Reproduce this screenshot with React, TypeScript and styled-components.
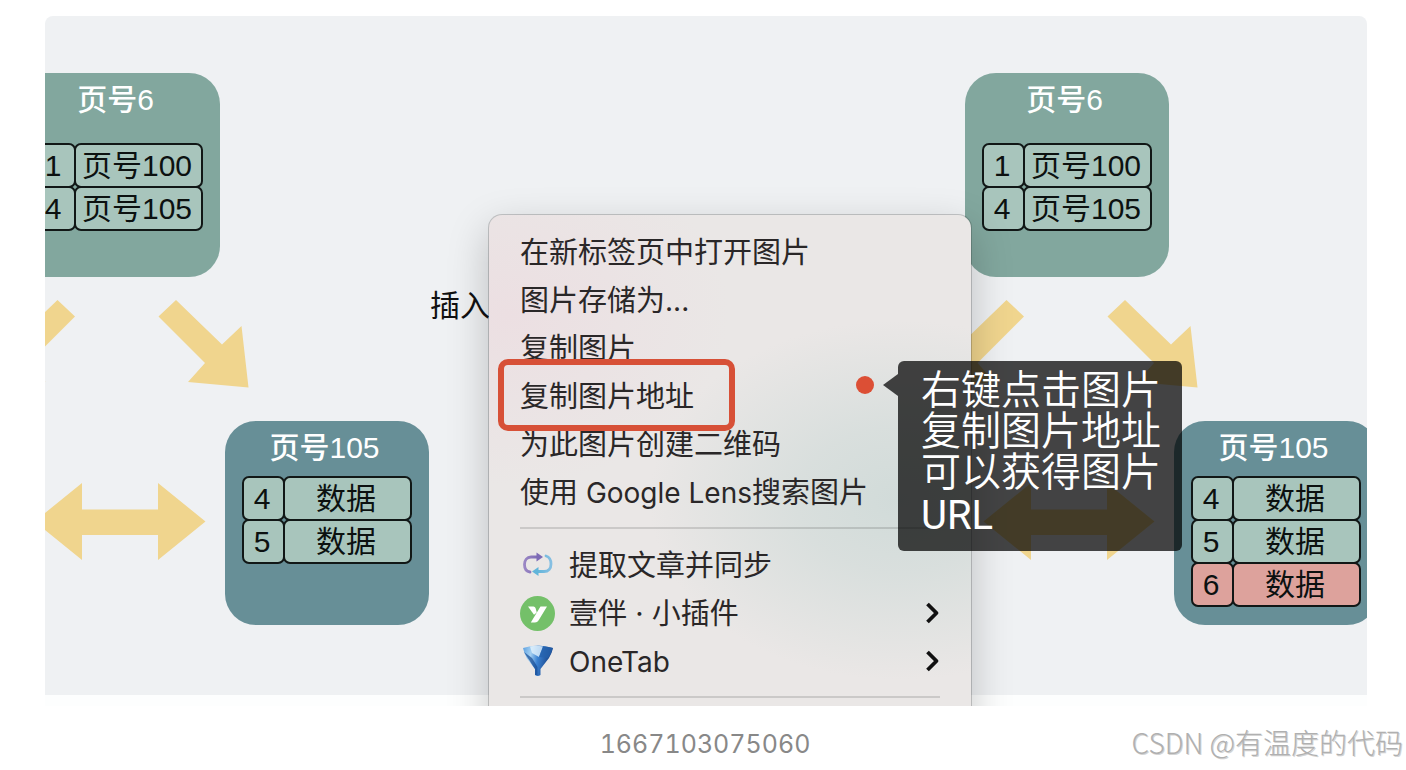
import React from "react";
import styled, { createGlobalStyle } from "styled-components";

const cjk = '"Noto Sans CJK SC", sans-serif';

const GlobalStyle = createGlobalStyle`
  *, *::before, *::after { box-sizing: border-box; }
  body { margin: 0; background: #fff; }
`;

const Page = styled.main`
  padding-top: 16px;
  overflow: hidden;
`;

const Figure = styled.figure`
  margin: 0;
`;

const Stage = styled.div`
  position: relative;
  height: 690px;
  margin: 0 39px 0 45px;
  padding-bottom: 11px;
  overflow: hidden;
  border-radius: 8px 8px 0 0;
  background: #fdfefe;
`;

const Canvas = styled.div`
  height: 100%;
  background: #eff1f3;
`;

const Tree = styled.section<{ $x: number }>`
  position: absolute;
  top: 0;
  left: ${(p) => p.$x}px;
  width: 420px;
  height: 679px;
`;

const Arrows = styled.svg`
  position: absolute;
  top: 0;
  left: 0;
  overflow: visible;
  fill: #f0d58e;
`;

const NodeCard = styled.article<{ $leaf?: boolean }>`
  position: absolute;
  left: ${(p) => (p.$leaf ? 180 : -29)}px;
  top: ${(p) => (p.$leaf ? 405 : 57)}px;
  display: flex;
  flex-direction: column;
  align-items: center;
  gap: ${(p) => (p.$leaf ? 10 : 25)}px;
  width: 204px;
  height: 204px;
  padding-top: 9px;
  border-radius: 31px;
  background: ${(p) => (p.$leaf ? "#678f97" : "#82a79e")};
  font-family: "Liberation Sans", ${cjk};
  font-size: 30px;
  line-height: 36px;
`;

const NodeTitle = styled.h2`
  margin: 0;
  padding-right: 5px;
  color: #fff;
  font-size: inherit;
  font-weight: 500;
`;

const Records = styled.table`
  display: block;
  width: 170px;
  color: #0c1110;
`;

const RecordBody = styled.tbody`
  display: block;
`;

const RecordRow = styled.tr<{ $added?: boolean }>`
  display: flex;
  height: 45px;

  & + & { margin-top: -2px; }

  th, td {
    display: flex;
    align-items: center;
    justify-content: center;
    padding: 0 3px 0 0;
    border: 2px solid #111716;
    border-radius: 7px;
    background: ${(p) => (p.$added ? "#dda29c" : "#a8c5bc")};
    font-weight: 400;
    white-space: nowrap;
  }
  th { width: 43px; margin-right: -2px; }
  td { flex: 1; }
`;

const InsertLabel = styled.span`
  position: absolute;
  left: 385px;
  top: 269px;
  color: #111;
  font: 30px/36px ${cjk};
`;

const Menu = styled.ul`
  position: absolute;
  left: 444px;
  top: 199px;
  width: 482px;
  margin: 0;
  padding: 13px 31px 40px;
  list-style: none;
  border-radius: 13px;
  background:
    radial-gradient(ellipse 250px 180px at 410px 285px, #d1dbd9 0%, rgba(211, 220, 218, 0.75) 40%, rgba(234, 231, 230, 0) 100%),
    radial-gradient(ellipse 220px 170px at 20px 100px, #ecdfe2 0%, rgba(236, 223, 226, 0) 100%),
    #eae7e6;
  box-shadow: 0 0 0 1px rgba(0, 0, 0, 0.18), 0 14px 42px rgba(0, 0, 0, 0.22);
`;

const MenuRow = styled.li<{ $marked?: boolean }>`
  position: relative;

  &::after {
    content: ${(p) => (p.$marked ? '""' : "none")};
    position: absolute;
    z-index: 1;
    left: -22px;
    top: -13px;
    width: 237px;
    height: 72px;
    border: 6px solid #d75037;
    border-radius: 10px;
    pointer-events: none;
  }
`;

const MenuButton = styled.button`
  display: flex;
  align-items: center;
  gap: 14px;
  width: 100%;
  height: 48px;
  padding: 0;
  border: 0;
  background: none;
  color: #2a2728;
  font: 29px/42px ${cjk};
  text-align: left;
  white-space: pre;
`;

const Latin = styled.span`
  font-family: Inter, sans-serif;
  font-size: 28px;
`;

const MenuText = styled.span`
  flex: 1;
  height: 40px;
  font-family: Inter, ${cjk};
`;

const Divider = styled.li`
  height: 2px;
  margin: 11px 0 12px;
  background: rgba(0, 0, 0, 0.13);
`;

const Dot = styled.span`
  position: absolute;
  left: 811px;
  top: 360px;
  width: 18px;
  height: 18px;
  border-radius: 50%;
  background: #dc4f35;
`;

const Tooltip = styled.aside`
  position: absolute;
  left: 853px;
  top: 345px;
  width: 284px;
  padding: 9px 20px 12px 23px;
  border-radius: 6px;
  background: rgba(0, 0, 0, 0.72);
  color: #fff;
  font: 350 40px/41px Roboto, ${cjk};

  &::before {
    content: "";
    position: absolute;
    left: -15px;
    top: 13px;
    width: 15px;
    height: 22px;
    background: rgba(0, 0, 0, 0.72);
    clip-path: polygon(0 50%, 100% 0, 100% 100%);
  }
`;

const TooltipLine = styled.span<{ $latin?: boolean }>`
  display: block;
  font-weight: ${(p) => (p.$latin ? 400 : 350)};
  line-height: ${(p) => (p.$latin ? 46 : 41)}px;
  white-space: nowrap;
`;

const Footer = styled.figcaption`
  display: grid;
  grid-template-columns: 1fr auto 1fr;
  padding: 20px 3px 8px 7px;
`;

const Caption = styled.span`
  grid-column: 2;
  color: #888;
  font: 25px/36px Inter, sans-serif;
  font-variant-numeric: tabular-nums;
`;

const Watermark = styled.span`
  justify-self: end;
  color: #b0b0b0;
  font: 300 28px/32px ${cjk};
  text-shadow: 1px 1px 0 #d4d4d4;
  white-space: nowrap;
`;

type RecordItem = { id: number; value: string; added?: boolean };

function PageNode({ title, leaf, records }: { title: string; leaf?: boolean; records: RecordItem[] }) {
  return (
    <NodeCard $leaf={leaf}>
      <NodeTitle>{title}</NodeTitle>
      <Records>
        <RecordBody>
          {records.map((r) => (
            <RecordRow key={r.id} $added={r.added}>
              <th scope="row">{r.id}</th>
              <td>{r.value}</td>
            </RecordRow>
          ))}
        </RecordBody>
      </Records>
    </NodeCard>
  );
}

const indexRecords: RecordItem[] = [
  { id: 1, value: "页号100" },
  { id: 4, value: "页号105" },
];

const before: RecordItem[] = [
  { id: 4, value: "数据" },
  { id: 5, value: "数据" },
];

const after: RecordItem[] = [...before, { id: 6, value: "数据", added: true }];

function PageTree({ x, records }: { x: number; records: RecordItem[] }) {
  return (
    <Tree $x={x}>
      <Arrows width="420" height="679" aria-hidden="true">
        <path d="M131 284 177 328.500 196.500 310 203.500 371.500 143 366 160 347 113.500 300.500Z" />
        <path d="M12.500 284-33.500 328.500-53 310-60 371.500.500 366-16.500 347 30 300.500Z" />
        <path d="M-10.500 505.500 37 467V493.500H113V467L160.500 505.500 113 544V519H37V544Z" />
      </Arrows>
      <PageNode title="页号6" records={indexRecords} />
      <PageNode title="页号105" leaf records={records} />
    </Tree>
  );
}

function SyncIcon() {
  return (
    <svg width="35" height="35" viewBox="0 0 35 35" fill="none" aria-hidden="true">
      <defs>
        <linearGradient id="syncA" x1="0" x2="1">
          <stop offset="0" stopColor="#9a86c4" />
          <stop offset="1" stopColor="#7d6bb5" />
        </linearGradient>
        <linearGradient id="syncB" x1="0" x2="1">
          <stop offset="0" stopColor="#62b5da" />
          <stop offset="1" stopColor="#86bfe2" />
        </linearGradient>
      </defs>
      <path d="M10 24C6 23.500 4.500 20 4.500 16.500C4.500 12 7 9 11 9H18" stroke="url(#syncA)" strokeWidth="2.800" strokeLinecap="round" />
      <path d="M16.500 4.500 23 9 16.500 13.500Z" fill="#7d6bb5" />
      <path d="M26 8C29.500 9 31 12.500 31 16C31 20.500 28.500 23.500 24 23.500H17" stroke="url(#syncB)" strokeWidth="2.800" strokeLinecap="round" />
      <path d="M18.500 19 12 23.500 18.500 28Z" fill="#62b5da" />
    </svg>
  );
}

function YibanIcon() {
  return (
    <svg width="35" height="35" viewBox="0 0 35 35" aria-hidden="true">
      <circle cx="17.500" cy="17.500" r="17.500" fill="#74c069" />
      <path d="M8 10.500H13.500Q15 10.500 15.500 12L16.800 16.500 14 18.700Z" fill="#fff" />
      <path d="M20.500 10.500H27L18.500 24.500Q17.300 26.500 15 26.500H10.800Z" fill="#fff" />
    </svg>
  );
}

function FunnelIcon() {
  return (
    <svg width="35" height="35" viewBox="0 0 35 35" aria-hidden="true">
      <defs>
        <linearGradient id="funnel" x1="0" x2="1" y2=".2">
          <stop offset="0" stopColor="#5ba0e0" />
          <stop offset=".3" stopColor="#a5d0f2" />
          <stop offset=".55" stopColor="#3b82d2" />
          <stop offset="1" stopColor="#163f83" />
        </linearGradient>
      </defs>
      <path d="M3 4Q17.500-1 33 4Q32 9 29 14L20.500 25V31Q17.500 33 15 31V25L7 14.500Q4 9 3 4Z" fill="url(#funnel)" />
      <path d="M10 2.500Q17 1 23 2.500L19 13 12 9Z" fill="#e3f2fc" opacity=".8" />
      <path d="M23 2.500Q29 2.500 33 4Q31 10 28 14L19 13Z" fill="#2561ac" opacity=".75" />
      <path d="M4 8 15 25V31H17.500V23L12 14Z" fill="#174a91" opacity=".7" />
    </svg>
  );
}

function Chevron() {
  return (
    <svg width="15" height="22" viewBox="0 0 15 22" fill="none" stroke="#111" strokeWidth="3.800" aria-hidden="true">
      <path d="M2.500 2 11.500 11 2.500 20" strokeLinejoin="round" />
    </svg>
  );
}

const imageActions: { key: string; label: React.ReactNode; marked?: boolean }[] = [
  { key: "open", label: "在新标签页中打开图片" },
  { key: "save", label: <>图片存储为<Latin>...</Latin></> },
  { key: "copy", label: "复制图片" },
  { key: "address", label: "复制图片地址", marked: true },
  { key: "qr", label: "为此图片创建二维码" },
  { key: "lens", label: <>使用<Latin> Google Lens</Latin>搜索图片</> },
];

const extensions: { key: string; icon: React.ReactNode; label: React.ReactNode; sub?: boolean }[] = [
  { key: "sync", icon: <SyncIcon />, label: "提取文章并同步" },
  { key: "yiban", icon: <YibanIcon />, label: "壹伴 · 小插件", sub: true },
  { key: "onetab", icon: <FunnelIcon />, label: <Latin>OneTab</Latin>, sub: true },
];

export default function App() {
  return (
    <Page>
      <GlobalStyle />
      <Figure>
        <Stage>
          <Canvas />
          <PageTree x={0} records={before} />
          <PageTree x={949} records={after} />
          <InsertLabel>插入</InsertLabel>
          <Menu>
            {imageActions.map((a) => (
              <MenuRow key={a.key} $marked={a.marked}>
                <MenuButton type="button"><MenuText>{a.label}</MenuText></MenuButton>
              </MenuRow>
            ))}
            <Divider role="separator" />
            {extensions.map((e) => (
              <MenuRow key={e.key}>
                <MenuButton type="button">
                  {e.icon}
                  <MenuText>{e.label}</MenuText>
                  {e.sub && <Chevron />}
                </MenuButton>
              </MenuRow>
            ))}
            <Divider role="separator" />
          </Menu>
          <Dot />
          <Tooltip>
            <TooltipLine>右键点击图片</TooltipLine>
            <TooltipLine>复制图片地址</TooltipLine>
            <TooltipLine>可以获得图片</TooltipLine>
            <TooltipLine $latin>URL</TooltipLine>
          </Tooltip>
        </Stage>
        <Footer>
          <Caption>1667103075060</Caption>
          <Watermark>CSDN @有温度的代码</Watermark>
        </Footer>
      </Figure>
    </Page>
  );
}
